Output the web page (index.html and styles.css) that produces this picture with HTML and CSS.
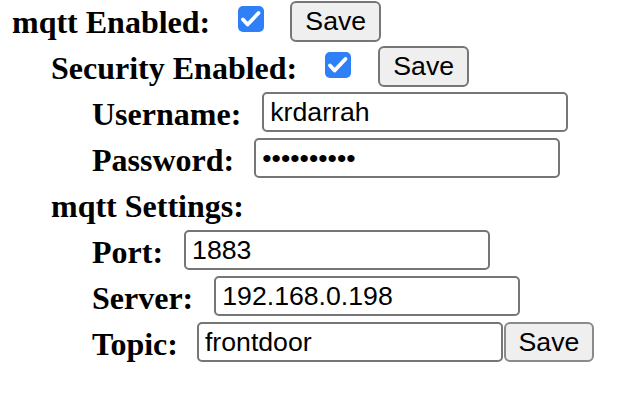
FILE: index.html
```html
<!DOCTYPE html>
<html lang="en">
<head>
<meta charset="utf-8">
<title>mqtt Settings</title>
<link rel="stylesheet" href="styles.css">
</head>
<body>
<form class="form" onsubmit="return false">
  <div class="row lvl0">
    <span class="label">mqtt Enabled:</span>
    <span class="check" role="checkbox" aria-checked="true"><svg viewBox="0 0 26 26" width="26" height="26"><rect x="0" y="0" width="26" height="26" rx="5" fill="#2f7ff7"/><polyline points="5,13.5 9.6,18.5 20.5,7" fill="none" stroke="#fff" stroke-width="3.8" stroke-linecap="round" stroke-linejoin="round"/></svg></span>
    <button class="btn btn-row1" type="button">Save</button>
  </div>
  <div class="row lvl1">
    <span class="label">Security Enabled:</span>
    <span class="check" role="checkbox" aria-checked="true"><svg viewBox="0 0 26 26" width="26" height="26"><rect x="0" y="0" width="26" height="26" rx="5" fill="#2f7ff7"/><polyline points="5,13.5 9.6,18.5 20.5,7" fill="none" stroke="#fff" stroke-width="3.8" stroke-linecap="round" stroke-linejoin="round"/></svg></span>
    <button class="btn btn-row2" type="button">Save</button>
  </div>
  <div class="row lvl2">
    <label class="label" for="user">Username:</label>
    <input class="field" id="user" type="text" value="krdarrah">
  </div>
  <div class="row lvl2">
    <label class="label" for="pass">Password:</label>
    <input class="field field-pass" id="pass" type="password" value="1234567890">
  </div>
  <div class="row lvl1">
    <span class="label">mqtt Settings:</span>
  </div>
  <div class="row lvl2">
    <label class="label" for="port">Port:</label>
    <input class="field" id="port" type="text" value="1883">
  </div>
  <div class="row lvl2">
    <label class="label" for="server">Server:</label>
    <input class="field" id="server" type="text" value="192.168.0.198">
  </div>
  <div class="row lvl2">
    <label class="label" for="topic">Topic:</label>
    <input class="field field-topic" id="topic" type="text" value="frontdoor">
    <button class="btn btn-inline" type="button">Save</button>
  </div>
</form>
</body>
</html>
```
FILE: styles.css
```css
html, body {
  margin: 0;
  padding: 0;
  background: #ffffff;
}

.form {
  margin: 0;
  padding: 0;
}

.row {
  display: flex;
  align-items: flex-start;
  height: 46px;
}

.lvl0 { padding-left: 12px; }
.lvl1 { padding-left: 51px; }
.lvl2 { padding-left: 92px; }

.label {
  font-family: "Liberation Serif", "Times New Roman", serif;
  font-weight: 700;
  font-size: 32px;
  line-height: 44px;
  color: #000;
  white-space: nowrap;
}

.check {
  display: block;
  width: 26px;
  height: 26px;
  margin: 6px 0 0 28px;
}

.check svg {
  display: block;
}

.btn {
  box-sizing: border-box;
  height: 41px;
  width: 91px;
  margin: 1px 0 0 26px;
  padding: 0;
  font-family: "Liberation Sans", Arial, sans-serif;
  font-size: 26.67px;
  color: #000;
  background: #efefef;
  border: 2px solid #767676;
  border-radius: 6px;
}

.btn-row2 {
  margin-top: 0;
  margin-left: 27px;
}

.btn-inline {
  width: 90px;
  height: 40px;
  margin-top: 0;
  margin-left: 1px;
  border-color: #8a8a8a;
}

.field {
  box-sizing: border-box;
  width: 306px;
  height: 40px;
  margin: 0 0 0 21px;
  padding: 0 6px;
  font-family: "Liberation Sans", Arial, sans-serif;
  font-size: 26.67px;
  color: #000;
  background: #fff;
  border: 2px solid #767676;
  border-radius: 5px;
  outline: none;
}

.field-pass {
  margin-left: 20px;
}

.field-topic {
  margin-left: 19px;
}
```
